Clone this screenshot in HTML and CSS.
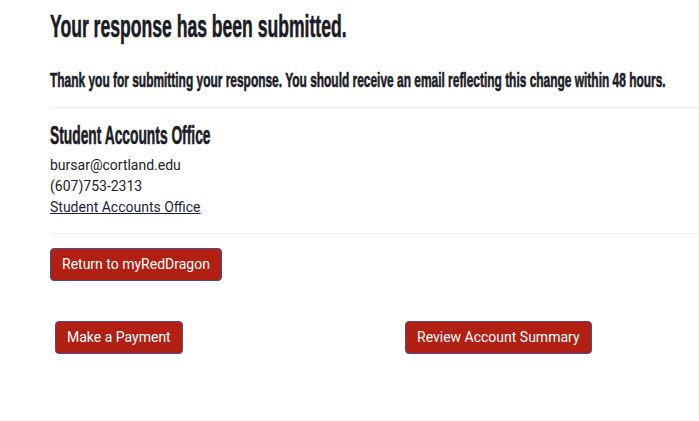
FILE: index.html
```html
<!DOCTYPE html>
<html>
<head>
<meta charset="utf-8">
<link rel="stylesheet" href="styles.css">
</head>
<body>
<main class="page">
  <h1 class="title"><span class="cond cond-title">Your response has been submitted.</span></h1>
  <h2 class="subtitle"><span class="cond cond-sub">Thank you for submitting your response. You should receive an email reflecting this change within 48 hours.</span></h2>
  <hr class="rule rule-top">
  <section class="contact">
    <h3 class="contact-title"><span class="cond cond-contact">Student Accounts Office</span></h3>
    <div class="contact-line">bursar@cortland.edu</div>
    <div class="contact-line">(607)753-2313</div>
    <div class="contact-line"><a class="link" href="#">Student Accounts Office</a></div>
  </section>
  <hr class="rule rule-bottom">
  <div class="return-row">
    <a class="btn" href="#">Return to myRedDragon</a>
  </div>
  <div class="actions">
    <div class="action-col"><a class="btn" href="#">Make a Payment</a></div>
    <div class="action-col"><a class="btn" href="#">Review Account Summary</a></div>
  </div>
</main>
</body>
</html>
```
FILE: styles.css
```css
html, body {
  margin: 0;
  padding: 0;
  background: #ffffff;
}
body {
  font-family: Roboto, "Liberation Sans", sans-serif;
  color: #222222;
  font-size: 14px;
}
.page {
  padding-left: 50px;
  overflow: hidden;
}
.cond {
  font-family: "Liberation Sans", Arial, sans-serif;
  font-weight: bold;
  display: inline-block;
  white-space: nowrap;
  transform-origin: 0 50%;
  color: #1c1c26;
  -webkit-text-stroke: 0.6px #1c1c26;
}
.cond-title {
  transform: scaleX(0.567);
}
.cond-sub {
  transform: scaleX(0.612);
}
.cond-contact {
  transform: scaleX(0.552);
}
.title {
  margin: 0;
  padding-top: 7px;
  font-size: 31px;
  line-height: 40px;
  height: 40px;
  white-space: nowrap;
}
.subtitle {
  margin: 0;
  padding-top: 21px;
  font-size: 19.5px;
  line-height: 24px;
  height: 24px;
  white-space: nowrap;
}
.rule {
  border: 0;
  border-top: 1px solid #ececec;
  height: 0;
  margin: 0;
}
.rule-top {
  margin-top: 15px;
}
.contact {
  padding-top: 12px;
}
.contact-title {
  margin: 0 0 5px 0;
  font-size: 25px;
  line-height: 30px;
  height: 30px;
  white-space: nowrap;
}
.contact-line {
  line-height: 21px;
  color: #222222;
}
.link {
  color: #1e1e3c;
  text-decoration: underline;
}
.rule-bottom {
  margin-top: 15px;
}
.return-row {
  padding-top: 14px;
}
.btn {
  display: inline-block;
  background: #b21f13;
  color: #ffffff;
  text-decoration: none;
  border: 1px solid #4e4a8c;
  border-radius: 4px;
  padding: 6px 11px;
  line-height: 19px;
  font-size: 14px;
}
.actions {
  display: grid;
  grid-template-columns: 350px 350px;
  padding-top: 40px;
}
.action-col {
  padding-left: 5px;
}
```
